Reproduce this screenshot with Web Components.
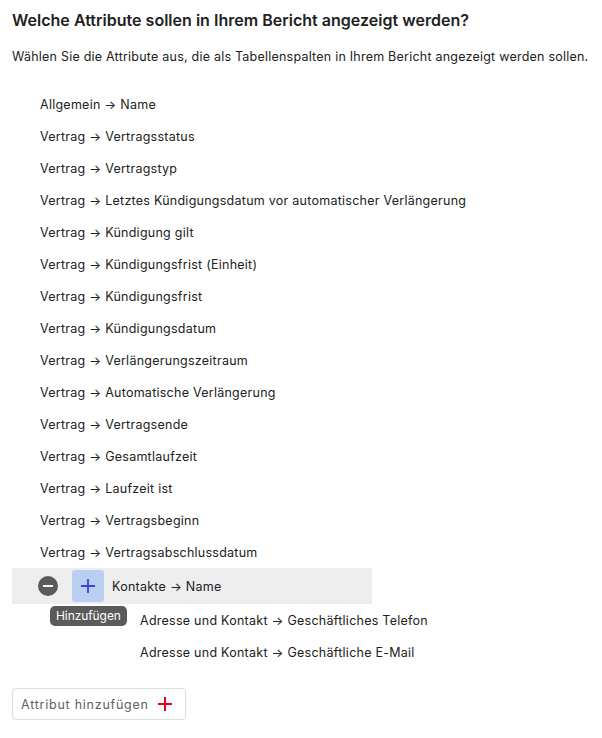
<!DOCTYPE html>
<html lang="de"><head><meta charset="utf-8"><title>Bericht</title>
<style>body{margin:0;background:#fff;color:#212121;font-family:Inter,"Liberation Sans",sans-serif;font-size:12.5px;letter-spacing:.255px}</style></head><body>
<report-attributes></report-attributes>
<script>
const define=(name,html)=>customElements.define(name,class extends HTMLElement{
constructor(){super();this.attachShadow({mode:"open"}).innerHTML=html}});
define("attribute-row",`<style>:host{display:flex;align-items:center;box-sizing:border-box;height:32px;padding:2px 0 0 28px;line-height:20px;white-space:nowrap}:host([child]){padding-left:128px}</style><span><slot></slot></span>`);
define("tool-tip",`<style>:host{position:absolute;left:38px;top:38px;height:20px;padding:0 6px;border-radius:5px;background:#5a5a5a;color:#fff;font-size:12px;letter-spacing:-.08px;line-height:20px;white-space:nowrap}</style><slot></slot>`);
define("active-row",`<style>:host{position:relative;display:flex;align-items:center;box-sizing:border-box;width:360px;height:36px;padding-left:26px;background:#eee}
button{border:0;padding:0;display:block;font:inherit}.remove{width:20px;height:20px;border-radius:50%;background:#5a5a5a;margin-right:14px}.add{width:32px;height:32px;border-radius:3px;background:#bad0f3;margin-right:8px}svg{display:block}</style>
<button class="remove" aria-label="Entfernen"><svg width="20" height="20"><path d="M5 10H15" stroke="#fff" stroke-width="2"/></svg></button>
<button class="add" aria-label="Hinzufügen"><svg width="32" height="32"><path d="M9 16H23M16 9V23" stroke="#3b43d8" stroke-width="1.8"/></svg></button><span><slot></slot></span><tool-tip>Hinzufügen</tool-tip>`);
define("add-attribute",`<style>:host{display:block;margin-top:20px}button{display:flex;align-items:center;box-sizing:border-box;width:174px;height:32px;padding:0 0 0 8px;border:1px solid #ddd;border-radius:4px;background:#fff;color:#616161;font:12.5px Inter,sans-serif;letter-spacing:.76px;white-space:nowrap}span{width:136px;text-align:left}svg{display:block}</style><button><span><slot></slot></span><svg width="16" height="16"><path d="M1 8H15M8 1V15" stroke="#e60014" stroke-width="2"/></svg></button>`);
define("report-attributes",`<style>:host{display:block;padding:8px 12px}h1{margin:0;font-size:16px;line-height:24px;font-weight:600;letter-spacing:.017px;white-space:nowrap}p{margin:15px 0 21px;line-height:20px;letter-spacing:.225px;white-space:nowrap}</style>
<h1>Welche Attribute sollen in Ihrem Bericht angezeigt werden?</h1><p>Wählen Sie die Attribute aus, die als Tabellenspalten in Ihrem Bericht angezeigt werden sollen.</p>
${["Allgemein → Name",...["Vertragsstatus","Vertragstyp","Letztes Kündigungsdatum vor automatischer Verlängerung","Kündigung gilt","Kündigungsfrist (Einheit)","Kündigungsfrist","Kündigungsdatum","Verlängerungszeitraum","Automatische Verlängerung","Vertragsende","Gesamtlaufzeit","Laufzeit ist","Vertragsbeginn","Vertragsabschlussdatum"].map(t=>"Vertrag → "+t)].map(t=>`<attribute-row>${t}</attribute-row>`).join("")}
<active-row>Kontakte → Name</active-row><attribute-row child>Adresse und Kontakt → Geschäftliches Telefon</attribute-row><attribute-row child>Adresse und Kontakt → Geschäftliche E-Mail</attribute-row><add-attribute>Attribut hinzufügen</add-attribute>`);
</script></body></html>
